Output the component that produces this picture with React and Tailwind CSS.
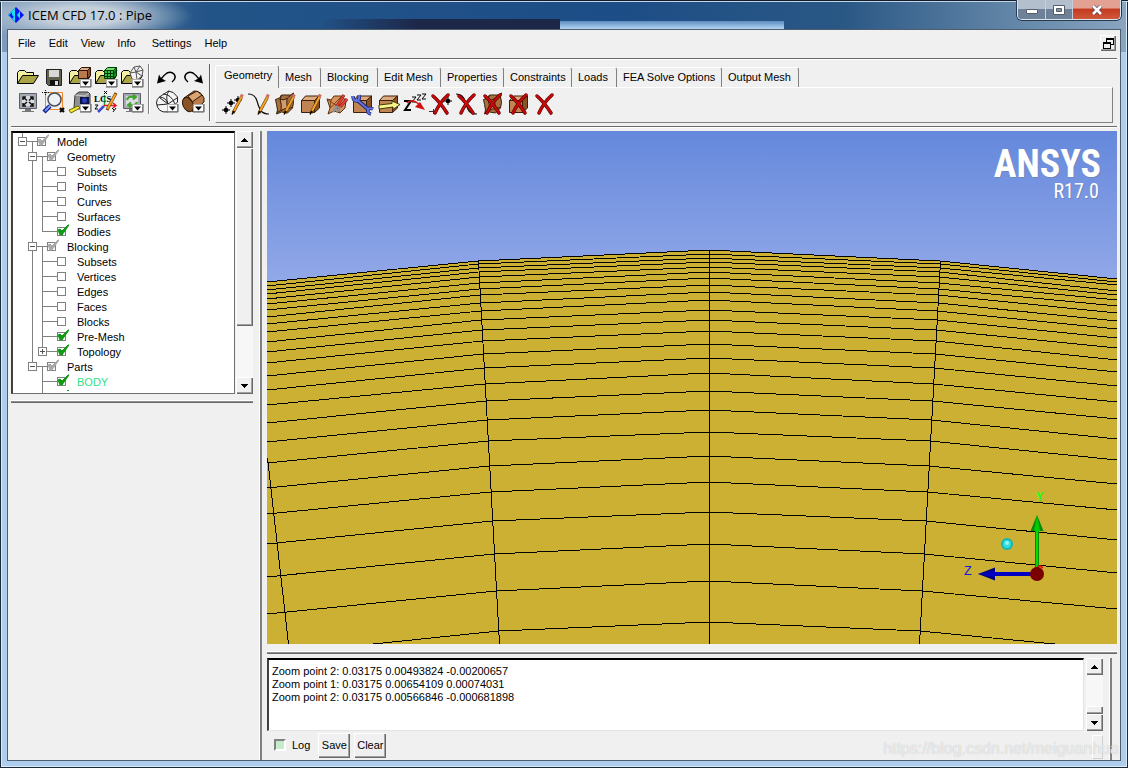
import React, { useState } from "react";

const raised =
  "bg-[#f0f0f0] shadow-[inset_1px_1px_0_#ffffff,inset_-1px_-1px_0_#696969,inset_-2px_-2px_0_#a0a0a0]";

const menus = ["File", "Edit", "View", "Info", "Settings", "Help"];

const tabs = [
  { name: "Geometry", width: "w-[64px]" },
  { name: "Mesh", width: "w-[42px]" },
  { name: "Blocking", width: "w-[57px]" },
  { name: "Edit Mesh", width: "w-[63px]" },
  { name: "Properties", width: "w-[63px]" },
  { name: "Constraints", width: "w-[68px]" },
  { name: "Loads", width: "w-[45px]" },
  { name: "FEA Solve Options", width: "w-[105px]" },
  { name: "Output Mesh", width: "w-[77px]" },
];

const tree = [
  { name: "Model", depth: 0, node: "-", state: "partial" },
  { name: "Geometry", depth: 1, node: "-", state: "partial" },
  { name: "Subsets", depth: 2 },
  { name: "Points", depth: 2 },
  { name: "Curves", depth: 2 },
  { name: "Surfaces", depth: 2 },
  { name: "Bodies", depth: 2, state: "on" },
  { name: "Blocking", depth: 1, node: "-", state: "partial" },
  { name: "Subsets", depth: 2 },
  { name: "Vertices", depth: 2 },
  { name: "Edges", depth: 2 },
  { name: "Faces", depth: 2 },
  { name: "Blocks", depth: 2 },
  { name: "Pre-Mesh", depth: 2, state: "on" },
  { name: "Topology", depth: 2, node: "+", state: "on" },
  { name: "Parts", depth: 1, node: "-", state: "partial" },
  { name: "BODY", depth: 2, state: "on", color: "text-[#2fe08c]" },
];

const indent = ["pl-[5px]", "pl-[15px]", "pl-[25px]"];

const messages = [
  "Zoom point 2: 0.03175 0.00493824 -0.00200657",
  "Zoom point 1: 0.03175 0.00654109 0.00074031",
  "Zoom point 2: 0.03175 0.00566846 -0.000681898",
];

// mesh rows: y at left edge, inner columns, centre, right edge
const rows = [
  [151, 130, 119, 148],
  [155, 133, 123, 151],
  [159, 137, 127, 154],
  [163, 141, 131, 160],
  [168, 146, 136, 164],
  [173, 152, 141, 169],
  [179, 158, 147, 175],
  [186, 164, 154, 182],
  [193, 172, 161, 190],
  [201, 180, 169, 198],
  [211, 189, 179, 207],
  [221, 199, 189, 217],
  [232, 210, 200, 229],
  [245, 223, 213, 241],
  [259, 237, 227, 255],
  [274, 253, 242, 271],
  [292, 270, 260, 288],
  [311, 289, 279, 308],
  [332, 310, 301, 329],
  [357, 335, 325, 353],
  [383, 361, 351, 379],
  [413, 390, 381, 409],
  [446, 423, 413, 442],
  [483, 460, 450, 478],
  [524, 500, 491, 519],
];

const rowPoints = ([left, inner, mid, right]) => {
  const shift = ((inner - 130) * 21) / 383;
  return `0,${left} ${211 + shift},${inner} 442,${mid} ${673 - shift},${inner} 850,${right}`;
};

const Icon = ({ children }) => (
  <svg viewBox="0 0 24 24" className="w-6 h-6 block" aria-hidden="true">
    {children}
  </svg>
);

const Drop = () => (
  <g>
    <path d="M12.500 14.500h10v7h-10z" fill="#fff" stroke="#b0b0b0" />
    <path d="M12 22h11v-8" fill="none" stroke="#555" />
    <path d="M14 16.500h7l-3.500 4z" fill="#000" />
  </g>
);

const Folder = () => (
  <g stroke="#000" strokeWidth="1">
    <path d="M1.500 18.500v-11l2-2h5l2 2h7v4" fill="#f5f0a0" />
    <path d="M1.500 18.500l5-8h16l-5 8z" fill="#a9a445" />
  </g>
);

const Box = () => (
  <g stroke="#3a200c" strokeWidth="1" strokeLinejoin="round">
    <path d="M2.500 8.500h13v12h-13z" fill="#c08552" />
    <path d="M2.500 8.500l4-4.500h14l-5 4.500z" fill="#deaa7c" />
    <path d="M15.500 8.500l5-4.500v12l-5 4.500z" fill="#8a5426" />
  </g>
);

const Surface = () => (
  <g stroke="#3a200c" strokeWidth="1" strokeLinejoin="round">
    <path
      d="M2.500 7.500l4-1.500 2-3h9l3-2-1 4q2 5 0 11l-5 5-6-1-5 2 1-4q-1-6-2-10.500z"
      fill="#a8703e"
    />
    <path d="M7 7.500q4 1 7-1-1 6 1 10-4 0-7 2 1-6-1-11z" fill="#d19c69" />
    <path d="M7 7.500l1.500-4.500M14 6.500l4-3.500M15 16.500l4-1M8 18.500l-4 2" fill="none" />
  </g>
);

const Pencil = () => (
  <g>
    <path d="M12 21l8.500-16" stroke="#5f3600" strokeWidth="3" />
    <path d="M13 19l7.500-14" stroke="#f5a326" strokeWidth="2" />
    <path d="M11 22.500l2-3.500" stroke="#000" strokeWidth="1.500" />
    <path d="M20 5l1.500-2.500" stroke="#d46a5a" strokeWidth="3" />
  </g>
);

const Cross = () => (
  <g fill="none" strokeLinecap="round">
    <path d="M4 4q7 6 14 17M19 3q-8 7-13 18" stroke="#5c0000" strokeWidth="3.500" />
    <path d="M4 4q7 6 14 17M19 3q-8 7-13 18" stroke="#cc0808" strokeWidth="2.200" />
  </g>
);

const Curve = () => (
  <path d="M1 2q7 0 9 7t4 10q3 3 8 3" fill="none" stroke="#111" strokeWidth="1.200" />
);

const Dot = ({ x, y }) => (
  <g transform={`translate(${x} ${y})`}>
    <path d="M-4 0h8M0-4v8" stroke="#000" strokeWidth="1" />
    <circle r="2.300" fill="#000" />
  </g>
);

const Monitor = () => (
  <g>
    <path d="M3.500 3.500h17v15h-17z" fill="#a7a9b2" stroke="#5d5f68" />
    <path d="M6 6h12v10H6z" fill="#d9dbe0" />
    <path d="M9 19h6v2h3v1H6v-1h3z" fill="#777" />
  </g>
);

const fileIcons = [
  {
    name: "Open project",
    icon: <Folder />,
  },
  {
    name: "Save project",
    icon: (
      <g>
        <path d="M4.500 4.500h15v16h-13l-2-2z" fill="#60604c" stroke="#222" />
        <path d="M7 5h10v7H7z" fill="#d8d8d8" />
        <path d="M8 15h9v5H8z" fill="#111" />
        <path d="M13 16h3v4h-3z" fill="#ddd" />
      </g>
    ),
  },
  {
    name: "Open geometry",
    icon: (
      <g>
        <Folder />
        <g stroke="#2a1508">
          <path d="M10.500 5.500h9v8h-9z" fill="#b87a4d" />
          <path d="M10.500 5.500l3-3h9l-3 3z" fill="#deaa82" />
          <path d="M19.500 5.500l3-3v8l-3 3z" fill="#8a5028" />
        </g>
        <Drop />
      </g>
    ),
  },
  {
    name: "Open mesh",
    icon: (
      <g>
        <Folder />
        <g stroke="#003a00">
          <path d="M10.500 5.500h9v8h-9z" fill="#2fc040" />
          <path d="M10.500 5.500l3-3h9l-3 3z" fill="#66e070" />
          <path d="M19.500 5.500l3-3v8l-3 3z" fill="#148a20" />
          <path d="M13.500 5v9M16.500 5v9M10 8.500h10l3-3M10 11.500h10" fill="none" />
        </g>
        <Drop />
      </g>
    ),
  },
  {
    name: "Open blocking",
    icon: (
      <g>
        <Folder />
        <g fill="#f4f4f4" stroke="#555">
          <path d="M10 8l4-6 6-1 3 4-1 6-5 4-5-1z" />
          <path d="M10 8l6-1 6 4M14 2l2 5 7-2M16 7l1 8M20 1l-4 6" fill="none" />
        </g>
        <Drop />
      </g>
    ),
  },
  {
    name: "Fit window",
    icon: (
      <g>
        <Monitor />
        <path
          d="M7 7l4 3.500M17 7l-4 3.500M7 15.500l4-3.500M17 15.500l-4-3.500M7 10V7h3M14 7h3v3M7 13v3h3M17 13v3h-3"
          fill="none"
          stroke="#111"
          strokeWidth="1.500"
        />
      </g>
    ),
  },
  {
    name: "Box zoom",
    icon: (
      <g>
        <path d="M3.500 2.500h17v17h-17z" fill="none" stroke="#f0872a" />
        <path d="M0 2.500h7M3.500 0v6" stroke="#111" strokeDasharray="1 1" />
        <path d="M2 22l6-6" stroke="#0b1a90" strokeWidth="4.500" />
        <path d="M3 21l5-5" stroke="#7f9cf0" strokeWidth="2" />
        <circle cx="12.500" cy="9.500" r="6.500" fill="#edf1f6" stroke="#4a4f58" strokeWidth="1.500" />
        <path d="M18 18l4 4M22 18l-4 4" stroke="#000" strokeWidth="2" />
      </g>
    ),
  },
  {
    name: "Measure distance",
    icon: (
      <g>
        <path d="M6 18l1-13 4-3h9l2 2v14l-4 2z" fill="#8f9092" stroke="#333" />
        <path d="M7 5l10 1 4-3M17 6v14" fill="none" stroke="#ccc" />
        <path d="M12 7h9v7h-9z" fill="#10134a" />
        <circle cx="16.500" cy="10.500" r="2.500" fill="#2741b8" />
        <path d="M1 20l9-4 2 2-9 5z" fill="#f4e433" stroke="#706800" />
        <Drop />
      </g>
    ),
  },
  {
    name: "Local coordinate system",
    icon: (
      <g>
        <path d="M10.500 16V5" stroke="#18a038" strokeWidth="1.500" />
        <path d="M10 16l-6 6" stroke="#3d48d0" strokeWidth="2.500" />
        <path d="M10 15.500h12m-3-2.500l3 2.500-3 2.500" fill="none" stroke="#e01818" strokeWidth="1.500" />
        <g fontFamily="Liberation Serif, serif" fontWeight="700" fill="#000">
          <text x="0" y="12" fontSize="9">LCS</text>
        </g>
        <path d="M1 15h3l-3 4h3M10 1l3 3m0-3l-3 3M18 18l2 2m2-2l-3 4" fill="none" stroke="#000" />
        <path d="M13 20L22 3" stroke="#6b3d00" strokeWidth="3" />
        <path d="M13.500 19l8-15" stroke="#f5a326" strokeWidth="2" />
      </g>
    ),
  },
  {
    name: "Refresh",
    icon: (
      <g>
        <Monitor />
        <path
          d="M7 10q1-4 6-3h3m-3-2.500l3 2.500-3 2.500M17 12q-1 4-6 3H8m3-2.500L8 15l3 2.500"
          fill="none"
          stroke="#3ea42c"
          strokeWidth="2"
        />
        <Drop />
      </g>
    ),
  },
];

const viewIcons = [
  {
    name: "Undo",
    icon: (
      <g>
        <path d="M17 17q5-4 2-8-3-3-7-1-3 2-6 6" fill="none" stroke="#000" strokeWidth="1.500" />
        <path d="M2 18.500l2-9 2 3.500 5 3z" fill="#000" />
      </g>
    ),
  },
  {
    name: "Redo",
    icon: (
      <g>
        <path d="M7 17q-5-4-2-8 3-3 7-1 3 2 6 6" fill="none" stroke="#000" strokeWidth="1.500" />
        <path d="M22 18.500l-2-9-2 3.500-5 3z" fill="#000" />
      </g>
    ),
  },
  {
    name: "Wire frame",
    icon: (
      <g>
        <g fill="#f6f6f6" stroke="#222">
          <path d="M1.500 13q0-4 3-6l9-6q5 0 9 6v5l-10 10q-10 1-11-9z" />
          <path
            d="M4 7q7 0 9 7 1 4-1 8M14 1q-4 5-1 13M2 15l11-1 9-6M5 8l8 6M8 4q8 0 12 10"
            fill="none"
          />
        </g>
        <Drop />
      </g>
    ),
  },
  {
    name: "Solid",
    icon: (
      <g>
        <g stroke="#2d1606">
          <path d="M3 8l10-7q7 0 10 7v4l-11 10z" fill="#b97c4a" />
          <path d="M7 6l9-5 5 4-10 7z" fill="#dba272" />
          <ellipse cx="7" cy="14.500" rx="5" ry="7.500" fill="#8a5426" transform="rotate(-25 7 14.500)" />
        </g>
        <Drop />
      </g>
    ),
  },
];

const geometryIcons = [
  {
    name: "Create point",
    icon: (
      <g>
        <Dot x={5} y={18} />
        <Dot x={10} y={11} />
        <Dot x={17} y={8} />
        <Pencil />
      </g>
    ),
  },
  {
    name: "Create curve",
    icon: (
      <g>
        <Curve />
        <Pencil />
      </g>
    ),
  },
  {
    name: "Create surface",
    icon: (
      <g>
        <Surface />
        <Pencil />
      </g>
    ),
  },
  {
    name: "Create body",
    icon: (
      <g>
        <Box />
        <Pencil />
      </g>
    ),
  },
  {
    name: "Create faceted",
    icon: (
      <g>
        <path
          d="M2 7l4 1 3-4h8l4 5-1 7-5 5-6-2-6 3 2-6z"
          fill="#d8935a"
          stroke="#5a3010"
          strokeLinejoin="round"
        />
        <path d="M2 7l7 5 8-8M5 16l5-4 5 9M6 8l-1 8" fill="none" stroke="#7d4418" />
        <path d="M12 14l7-11M15 15l7-8" stroke="#7c1010" strokeWidth="3" />
        <path d="M12 14l7-11M15 15l7-8" stroke="#e04038" strokeWidth="2" />
        <path d="M8 20l4-6M12 20l3-5" stroke="#8b9094" strokeWidth="2.500" />
      </g>
    ),
  },
  {
    name: "Repair geometry",
    icon: (
      <g>
        <Box />
        <path d="M5 7l13 11" stroke="#1c2570" strokeWidth="4" />
        <path
          d="M2 4q0 5 4 5 3-1 2-6M22 17q-4-2-5 1-1 3 3 4"
          fill="none"
          stroke="#1c2570"
          strokeWidth="3.500"
        />
        <path
          d="M5 7l13 11M2 4q0 5 4 5 3-1 2-6M22 17q-4-2-5 1-1 3 3 4"
          fill="none"
          stroke="#6474dc"
          strokeWidth="2"
        />
      </g>
    ),
  },
  {
    name: "Transform geometry",
    icon: (
      <g>
        <Box />
        <path d="M2 13l13-1.500V9l8 3.500-7 5v-2.500L2 17z" fill="#faf58b" stroke="#3c3a10" />
      </g>
    ),
  },
  {
    name: "Restore dormant entities",
    icon: (
      <g fill="none">
        <path d="M1 9h7L2 18h6" stroke="#000" strokeWidth="2" />
        <path d="M9 5h4l-4 5h4M14 3h4l-4 5h4M19 2h4l-4 5h4" stroke="#000" />
        <path d="M4 11q4-5 12 1" stroke="#e01515" strokeWidth="1.500" />
        <path d="M12 15l5-5 5 8z" fill="#d00f0f" />
      </g>
    ),
  },
  {
    name: "Delete point",
    icon: (
      <g>
        <Dot x={19} y={9} />
        <path d="M0 19.500h6M4.500 17v5" stroke="#333" />
        <Cross />
      </g>
    ),
  },
  {
    name: "Delete curve",
    icon: (
      <g>
        <Curve />
        <Cross />
      </g>
    ),
  },
  {
    name: "Delete surface",
    icon: (
      <g>
        <Surface />
        <Cross />
      </g>
    ),
  },
  {
    name: "Delete body",
    icon: (
      <g>
        <Box />
        <Cross />
      </g>
    ),
  },
  { name: "Delete any entity", icon: <Cross /> },
];

const ToolButton = ({ item }) => (
  <button type="button" aria-label={item.name} className="w-[26px] h-[25px] flex items-center justify-center">
    <Icon>{item.icon}</Icon>
  </button>
);

const Arrow = ({ down }) => (
  <svg viewBox="0 0 7 4" className="w-[7px] h-1" aria-hidden="true" shapeRendering="crispEdges">
    <path d={down ? "M0 0h7l-3.500 4z" : "M0 4h7L3.500 0z"} fill="#000" />
  </svg>
);

const ScrollButton = ({ down, label }) => (
  <button
    type="button"
    aria-label={label}
    className={`${raised} w-[17px] h-[17px] shrink-0 flex items-center justify-center`}
  >
    <Arrow down={down} />
  </button>
);

const TitleBar = () => (
  <div className="h-[29px] shrink-0 flex items-start justify-between">
    <div className="flex items-center gap-1 h-[29px] pl-px">
      <svg viewBox="0 0 16 16" className="w-4 h-4" aria-hidden="true">
        <path d="M8 0l8 8-8 8-8-8z" fill="#0a14f0" />
        <path d="M7 1v7H4V5.500L1 8l6 7V8.500L4 12 0 8z" fill="#19e0ee" />
        <path d="M7 1L4 8l3 3zM12 4v8L9 8z" fill="#19e0ee" />
      </svg>
      <span className="font-['Open_Sans',sans-serif] text-[13px] leading-4 text-black whitespace-nowrap">
        ICEM CFD 17.0 : Pipe
      </span>
    </div>
    <div className="flex h-5 rounded-b-[5px] overflow-hidden border border-t-0 border-[#dbe5ee] shadow-[0_0_0_1px_#26394f]">
      <button
        type="button"
        aria-label="Minimize"
        className="w-7 flex items-center justify-center border-r border-[#c4d0dd] bg-linear-to-b from-[#b3bfcd] from-45% to-[#6d8299] to-50%"
      >
        <span className="block mt-1 w-3 h-[5px] bg-white border border-[#555d69] rounded-[1px]"></span>
      </button>
      <button
        type="button"
        aria-label="Restore"
        className="w-[27px] flex items-center justify-center border-r border-[#c4d0dd] bg-linear-to-b from-[#b3bfcd] from-45% to-[#6d8299] to-50%"
      >
        <svg viewBox="0 0 12 10" className="w-3 h-2.5" aria-hidden="true">
          <path d="M.5.5h11v9H.5z" fill="#fff" stroke="#555d69" />
          <path d="M3.500 3.500h5v3h-5z" fill="#8495a8" stroke="#555d69" />
        </svg>
      </button>
      <button
        type="button"
        aria-label="Close"
        className="w-[47px] flex items-center justify-center bg-linear-to-b from-[#e3a193] from-40% via-[#c43a1f] via-50% to-[#d0573a]"
      >
        <svg viewBox="0 0 12 10" className="w-3 h-2.5" aria-hidden="true">
          <path d="M2 1l8 8M10 1L2 9" stroke="#5c4a55" strokeWidth="4" />
          <path d="M2 1l8 8M10 1L2 9" stroke="#fff" strokeWidth="2.500" />
        </svg>
      </button>
    </div>
  </div>
);

const TreeRow = ({ item }) => (
  <div className={`relative flex items-center h-[15px] ${indent[item.depth]}`}>
    {item.node ? (
      <button
        type="button"
        aria-label={`Toggle ${item.name}`}
        className="w-[9px] h-[9px] shrink-0 bg-white border border-[#808080]"
      >
        <svg viewBox="0 0 7 7" className="w-[7px] h-[7px] block" aria-hidden="true" shapeRendering="crispEdges">
          <path d={item.node === "+" ? "M1 3.500h5M3.500 1v5" : "M1 3.500h5"} stroke="#555" />
        </svg>
      </button>
    ) : (
      <span className="w-[9px] shrink-0"></span>
    )}
    <label className="flex items-center pl-[10px]">
      <span className="relative w-[9px] h-[9px] mr-[11px]">
        <input
          type="checkbox"
          defaultChecked={!!item.state}
          className="peer appearance-none block w-[9px] h-[9px] bg-white border border-[#808080]"
        />
        <svg
          viewBox="0 0 12 12"
          className="hidden peer-checked:block absolute w-3 h-3 left-0 bottom-0 pointer-events-none"
          aria-hidden="true"
        >
          <path
            d="M1 6l2-1 2 2 6-6h1L5 11H3z"
            fill={item.state === "on" ? "#0e9a12" : "#a9a9a9"}
            stroke={item.state === "on" ? "#0e9a12" : "#a9a9a9"}
          />
        </svg>
      </span>
      <span className={`leading-[15px] pt-px ${item.color || ""}`}>{item.name}</span>
    </label>
  </div>
);

const ModelTree = () => (
  <div className="flex h-[263px] gap-px">
    <div className="relative flex-1 bg-white overflow-hidden border-t-2 border-l-2 border-r border-b border-t-black border-l-[#404040] border-r-[#707070] border-b-[#707070] pt-px">
      <svg className="absolute left-0 top-0 w-16 h-[260px]" aria-hidden="true" shapeRendering="crispEdges">
        <path
          d="M9.500 0v9M9 8.500h16M19.500 9v225M20 23.500h16M20 113.500h16M20 233.500h16M29.500 24v75M29.500 114v105M29.500 234v26M29 38.500h16M29 53.500h16M29 68.500h16M29 83.500h16M29 98.500h16M29 128.500h16M29 143.500h16M29 158.500h16M29 173.500h16M29 188.500h16M29 203.500h16M29 218.500h16M29 248.500h16"
          fill="none"
          stroke="#808080"
        />
        <path d="M54 257.500h2" stroke="#0e9a12" />
      </svg>
      {tree.map((item, i) => (
        <TreeRow key={i} item={item} />
      ))}
    </div>
    <div className="w-[17px] flex flex-col bg-[#f7f7f7]">
      <ScrollButton label="Scroll up" />
      <div className={`${raised} h-[178px]`}></div>
      <div className="flex-1"></div>
      <ScrollButton down={true} label="Scroll down" />
    </div>
  </div>
);

const Viewport = () => (
  <div className="relative flex-1 min-h-0 overflow-hidden bg-linear-to-b from-[#6588dc] to-[#93a9e8] to-30%">
    <svg
      viewBox="0 0 850 513"
      preserveAspectRatio="none"
      className="absolute inset-0 w-full h-full"
      shapeRendering="crispEdges"
      aria-hidden="true"
    >
      <path d="M0 151L211 130L442 119L673 130L850 148V513H0z" fill="#cbb033" />
      <g fill="none" stroke="#000">
        {rows.map((row, i) => (
          <polyline key={i} points={rowPoints(row)} />
        ))}
        <path d="M442.500 119V513M211.500 130L232.500 513M673.500 130L652.500 513M0.500 327L21.500 513" />
      </g>
    </svg>

    {/* brand */}
    <div className="absolute right-4 top-4 text-right text-white [text-shadow:1px_1px_0_#7386b8] font-['Liberation_Sans_Narrow','Roboto_Condensed','Roboto',sans-serif]">
      <p className="text-[38px] leading-[34px] font-bold">ANSYS</p>
      <p className="text-[20px] leading-5 pr-0.5">R17.0</p>
    </div>

    {/* axis triad */}
    <svg viewBox="0 0 100 100" className="absolute right-[60px] bottom-[57px] w-[100px] h-[100px]" aria-hidden="true">
      <text x="79" y="14" fontFamily="Liberation Mono, monospace" fontSize="12" fontWeight="700" fill="#1cff1c">
        Y
      </text>
      <text x="7" y="88" fontFamily="Liberation Mono, monospace" fontSize="13" fill="#1414e0">
        Z
      </text>
      <path d="M80 84V44" stroke="#008a00" strokeWidth="4" />
      <path d="M80 84V44" stroke="#00dc00" strokeWidth="2" />
      <path d="M80 28l6.500 16h-13z" fill="#078a07" />
      <path d="M80 28l3 16h-6z" fill="#00cc00" />
      <path d="M76 87H38" stroke="#0000c4" strokeWidth="4" />
      <path d="M21 87l17-6.500v13z" fill="#00007c" />
      <path d="M21 87l17-3v6z" fill="#0000c4" />
      <path d="M80 80l3-1 3 2" fill="none" stroke="#f01010" strokeWidth="2" />
      <circle cx="80" cy="87" r="7" fill="#7a0000" />
      <circle cx="50" cy="57" r="6" fill="#16b5b5" />
      <circle cx="50" cy="57" r="4" fill="#35dcdc" />
      <circle cx="50" cy="56" r="2" fill="#8ff5f5" />
    </svg>
  </div>
);

const MessageWindow = () => (
  <div className="flex h-[102px] shrink-0">
    <div className="flex-1 flex flex-col">
      <div className="flex gap-0.5 h-[73px]">
        <div className="flex-1 bg-white border-t-2 border-l-2 border-t-black border-l-[#404040] border-b border-r border-b-[#e3e3e3] border-r-[#e3e3e3] pl-[3px] pt-[5px]">
          {messages.map((line) => (
            <p key={line} className="leading-[13px] whitespace-nowrap">
              {line}
            </p>
          ))}
        </div>
        <div className="w-[17px] flex flex-col bg-[#f7f7f7]">
          <ScrollButton label="Scroll log up" />
          <div className="flex-1"></div>
          <div className={`${raised} h-2`}></div>
          <ScrollButton down={true} label="Scroll log down" />
        </div>
      </div>
      <div className="flex items-start gap-1 pt-0.5 pl-[7px]">
        <label className="flex items-center gap-[6px] h-6 mr-1">
          <input
            type="checkbox"
            className="appearance-none w-3 h-3 bg-[#c5ebca] border-2 border-t-[#808080] border-l-[#808080] border-b-white border-r-white"
          />
          Log
        </label>
        <button type="button" className={`${raised} w-8 h-[25px]`}>
          Save
        </button>
        <button type="button" className={`${raised} w-8 h-[25px]`}>
          Clear
        </button>
        <span className="ml-auto mt-0.5 w-[11px] h-6 border border-t-white border-l-white border-r-[#d0d0d0] border-b-[#d0d0d0]"></span>
      </div>
    </div>
    <div className="ml-[6px] mr-[5px] w-[3px] border-l border-white border-r-2 border-r-[#808080]"></div>
  </div>
);

const App = () => {
  const [active, setActive] = useState("Geometry");

  return (
    <div className="relative h-screen flex flex-col overflow-hidden px-[7px] pb-[7px] font-['Liberation_Sans',Arial,sans-serif] text-[11px] text-black bg-[#afcdec] shadow-[inset_0_0_0_1px_#1c2b3c,inset_0_0_0_2px_#dcebf8]">
      <div className="absolute inset-x-0.5 top-0.5 h-[50px] bg-[radial-gradient(ellipse_110px_26px_at_80px_14px,#c3cfdb_35%,transparent),linear-gradient(to_right,#7f9cba,#235488_18%,#1d4d86_55%,#2a5885_75%,#89a5bf)]"></div>
      <div className="absolute left-[320px] top-[19px] w-[240px] h-2.5 bg-linear-to-r from-transparent to-[#1d2849] to-40%"></div>
      <div className="absolute left-[560px] top-[21px] w-[224px] h-2 bg-linear-to-b from-[#5c8cbf] to-[#b4d4f3]"></div>
      <div className="absolute inset-x-0 top-0 h-0.5 bg-[#c8d6e4] border-t border-[#101c30]"></div>
      <div className="relative flex-1 min-h-0 flex flex-col">
        <TitleBar />
        <div className="flex-1 min-h-0 flex flex-col bg-[#f0f0f0] border border-[#4e5e6e]">
          {/* menu */}
          <div className="flex items-center justify-between h-7 pl-[10px] pr-1 pb-0.5 shrink-0">
            <div className="flex gap-[13px]">
              {menus.map((menu) => (
                <button key={menu} type="button" className={menu === "Settings" ? "ml-[3px]" : ""}>
                  {menu}
                </button>
              ))}
            </div>
            <button
              type="button"
              aria-label="Restore document window"
              className={`${raised} w-4 h-4 flex items-center justify-center`}
            >
              <svg viewBox="0 0 11 11" className="w-[11px] h-[11px]" aria-hidden="true" shapeRendering="crispEdges">
                <path d="M3.500 4V1.500h7v5H8" fill="none" stroke="#000" />
                <path d="M3 1h8M0 5h8" stroke="#000" strokeWidth="2" />
                <path d="M.5 4.500h7v6h-7z" fill="none" stroke="#000" />
              </svg>
            </button>
          </div>
          <div className="mx-[3px] border-t border-b border-t-[#6a6a6a] border-b-white shrink-0"></div>

          {/* toolbars */}
          <div className="flex h-[66px] pl-[7px] shrink-0">
            <div className="grid grid-cols-[repeat(5,26px)] auto-rows-[25px] pt-1">
              {fileIcons.map((item) => (
                <ToolButton key={item.name} item={item} />
              ))}
            </div>
            <div className="mt-1 ml-[3px] mr-1 h-[50px] w-0.5 bg-[#808080] border-r border-white"></div>
            <div className="grid grid-cols-[repeat(2,26px)] auto-rows-[25px] pt-1">
              {viewIcons.map((item) => (
                <ToolButton key={item.name} item={item} />
              ))}
            </div>
            <div className="mt-1 ml-[3px] mr-1 h-[57px] w-0.5 bg-[#606060] border-r border-white"></div>
            <div className="flex-1 flex flex-col pt-[5px] pr-[7px]">
              <div role="tablist" className="flex items-end h-[22px]">
                {tabs.map((tab) => (
                  <button
                    key={tab.name}
                    type="button"
                    role="tab"
                    aria-selected={active === tab.name}
                    onClick={() => setActive(tab.name)}
                    className={`${tab.width} whitespace-nowrap text-left border-t border-t-white border-r border-r-[#808080] rounded-tr-[3px] ${
                      active === tab.name
                        ? "relative z-10 h-[23px] -mb-px pl-2 pb-1 bg-[#f0f0f0] border-l border-l-white rounded-tl-[3px]"
                        : "h-[20px] pl-[6px]"
                    }`}
                  >
                    {tab.name}
                  </button>
                ))}
              </div>
              <div className="flex items-center h-[36px] pl-1 pb-0.5 border border-t-white border-l-white border-r-[#808080] border-b-[#808080]">
                {geometryIcons.map((item) => (
                  <ToolButton key={item.name} item={item} />
                ))}
              </div>
            </div>
          </div>
          <div className="mx-[3px] border-t border-b border-t-[#6a6a6a] border-b-white shrink-0"></div>

          <div className="flex-1 min-h-0 flex">
            <div className="w-[245px] pl-[3px] pt-[3px] shrink-0">
              <ModelTree />
              <div className="mt-1.5 h-[3px] bg-[#909090] border-t border-white border-b border-b-[#696969]"></div>
            </div>
            <div className="mt-[3px] ml-1.5 mr-[5px] w-[3px] shrink-0 border-l border-white bg-[#808080]"></div>
            <div className="flex-1 min-w-0 flex flex-col pt-[3px] pr-[3px]">
              <Viewport />
              <div className="mt-[7px] mb-1 h-[3px] shrink-0 bg-[#909090] border-t border-white border-b border-b-[#696969]"></div>
              <MessageWindow />
            </div>
          </div>
        </div>
      </div>
      <p className="absolute right-[9px] bottom-[9px] text-[16px] leading-[20px] text-white/70 [text-shadow:0_0_1px_#b4b4b4] pointer-events-none">
        https://blog.csdn.net/meiguanhua
      </p>
    </div>
  );
};

export default App;
